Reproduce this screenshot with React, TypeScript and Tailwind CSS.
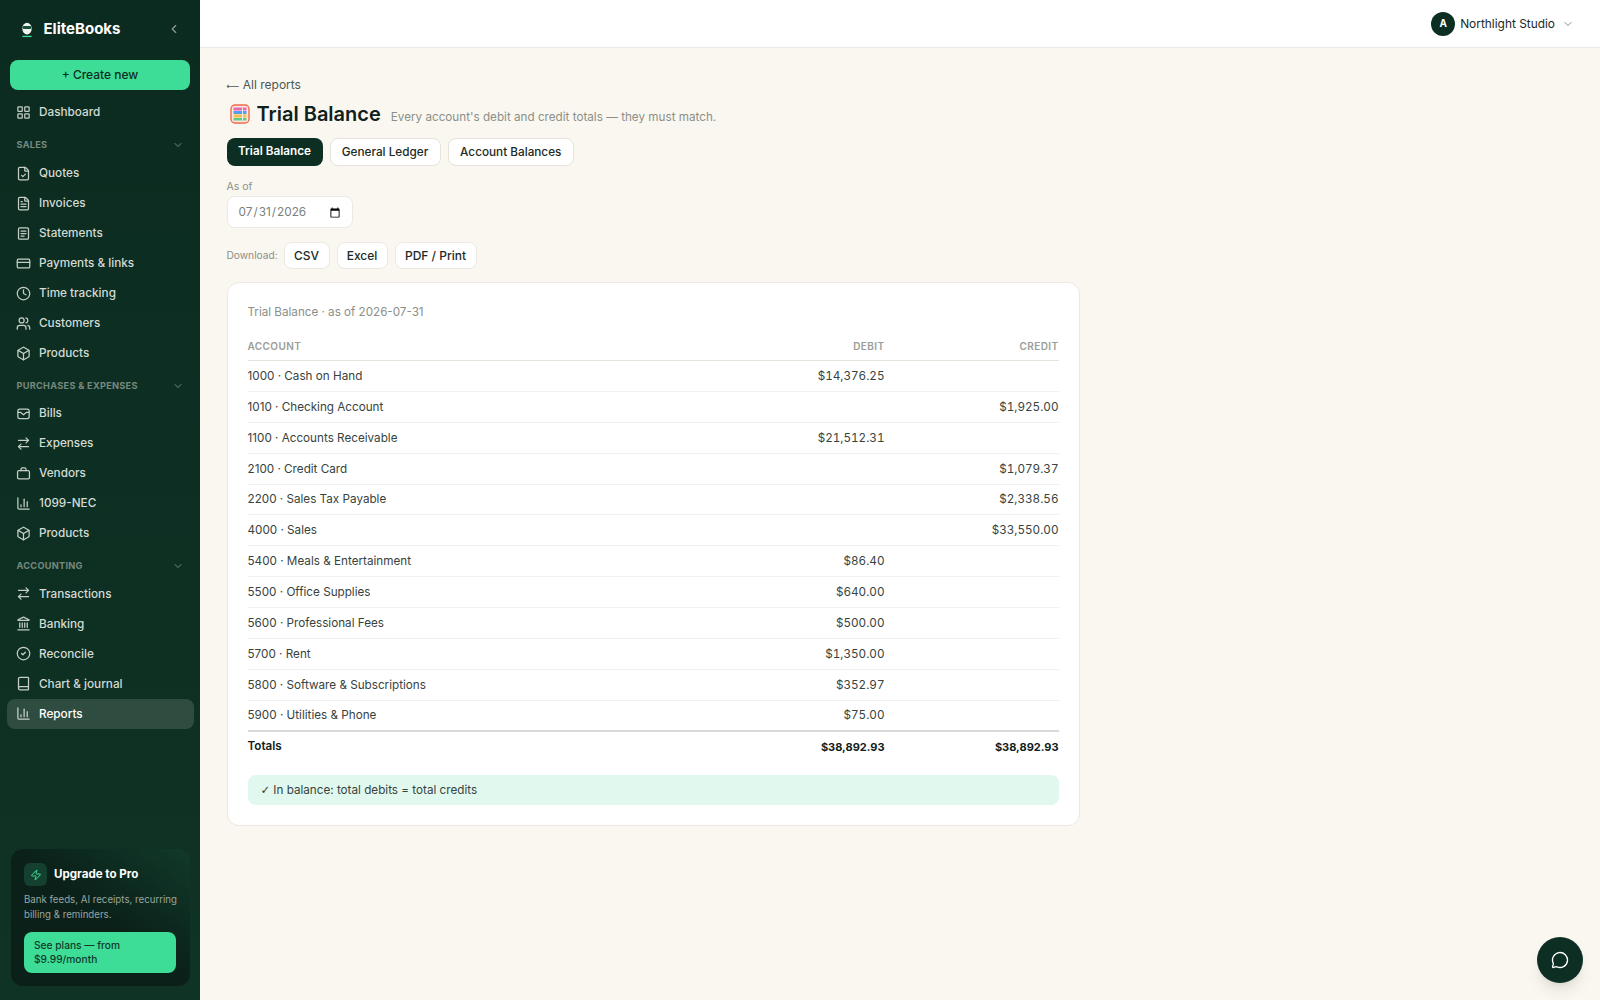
import {
  ArrowRightLeft,
  Book,
  Box,
  ChartColumn,
  ChevronDown,
  ChevronLeft,
  CircleCheck,
  Clock,
  CreditCard,
  FileCheck,
  FileText,
  Landmark,
  LayoutGrid,
  MessageCircle,
  Users,
  Zap,
} from "lucide-react"
import type { ComponentType } from "react"

type IconType = ComponentType<{ className?: string; strokeWidth?: number }>

function StatementIcon({ className, strokeWidth = 2 }: { className?: string; strokeWidth?: number }) {
  return (
    <svg viewBox="0 0 24 24" fill="none" stroke="currentColor" strokeWidth={strokeWidth} strokeLinecap="round" className={className}>
      <rect x="4" y="3" width="16" height="18" rx="2" />
      <path d="M8 8h8M8 12h8M8 16h5" />
    </svg>
  )
}

function BillsIcon({ className, strokeWidth = 2 }: { className?: string; strokeWidth?: number }) {
  return (
    <svg viewBox="0 0 24 24" fill="none" stroke="currentColor" strokeWidth={strokeWidth} strokeLinecap="round" strokeLinejoin="round" className={className}>
      <rect x="3" y="5" width="18" height="15" rx="3" />
      <path d="M3 10h4l5 4 5-4h4" />
    </svg>
  )
}

function VendorIcon({ className, strokeWidth = 2 }: { className?: string; strokeWidth?: number }) {
  return (
    <svg viewBox="0 0 24 24" fill="none" stroke="currentColor" strokeWidth={strokeWidth} strokeLinecap="round" strokeLinejoin="round" className={className}>
      <rect x="2.5" y="7.5" width="19" height="13" rx="2" />
      <path d="M8 7.5V5a2 2 0 0 1 2-2h4a2 2 0 0 1 2 2v2.5" />
    </svg>
  )
}

function Owl() {
  return (
    <svg viewBox="0 0 16 20" className="w-[14px] h-[17px]">
      <ellipse cx="8" cy="9" rx="5.5" ry="6.8" fill="#f4f4ef" />
      <rect x="3" y="6" width="10" height="3.5" rx="1.5" fill="#14513b" />
      <rect x="2.5" y="17.4" width="11" height="1.5" fill="#3ddc97" />
    </svg>
  )
}

function TrialIcon() {
  return (
    <svg viewBox="0 0 20 20" className="w-5 h-5">
      <rect x="1" y="1" width="18" height="18" rx="4" fill="#fde8df" stroke="#f2694e" strokeWidth="1.4" />
      <rect x="3.5" y="3.5" width="13" height="3" fill="#e56bb4" />
      <rect x="3.5" y="7" width="13" height="3" fill="#5b9df0" />
      <rect x="3.5" y="10.5" width="13" height="3" fill="#f2c14e" />
      <rect x="3.5" y="14" width="13" height="2.5" fill="#62c98a" />
      <path d="M12.5 3.5v13" stroke="#fff" strokeWidth="0.8" />
    </svg>
  )
}

function NavItem({ icon: Icon, label, active }: { icon: IconType; label: string; active?: boolean }) {
  return (
    <a
      className={
        active
          ? "flex items-center gap-[8px] h-[30px] px-[9.5px] rounded-lg bg-[#2f4c40] text-white text-[11.75px] font-medium"
          : "flex items-center gap-[8px] h-[30px] px-[9.5px] rounded-lg text-[#d3dbd5] text-[11.75px] font-medium"
      }
    >
      <Icon className="w-[15px] h-[15px] text-[#c5cfc8] shrink-0" strokeWidth={2} />
      <span className="mt-[2px]">{label}</span>
    </a>
  )
}

function NavHeading({ label, className }: { label: string; className: string }) {
  return (
    <div className={`flex items-center justify-between h-[23px] pl-[10px] pr-[10px] text-[#75897f] ${className}`}>
      <span className="text-[9.2px] font-bold tracking-[0.03em]">{label}</span>
      <ChevronDown className="w-3 h-3" />
    </div>
  )
}

const rows = [
  { account: "1000 · Cash on Hand", debit: "$14,376.25", credit: "" },
  { account: "1010 · Checking Account", debit: "", credit: "$1,925.00" },
  { account: "1100 · Accounts Receivable", debit: "$21,512.31", credit: "" },
  { account: "2100 · Credit Card", debit: "", credit: "$1,079.37" },
  { account: "2200 · Sales Tax Payable", debit: "", credit: "$2,338.56" },
  { account: "4000 · Sales", debit: "", credit: "$33,550.00" },
  { account: "5400 · Meals & Entertainment", debit: "$86.40", credit: "" },
  { account: "5500 · Office Supplies", debit: "$640.00", credit: "" },
  { account: "5600 · Professional Fees", debit: "$500.00", credit: "" },
  { account: "5700 · Rent", debit: "$1,350.00", credit: "" },
  { account: "5800 · Software & Subscriptions", debit: "$352.97", credit: "" },
  { account: "5900 · Utilities & Phone", debit: "$75.00", credit: "" },
]

export default function App() {
  return (
    <div className="flex h-[1000px] overflow-hidden bg-[#faf7f0] font-['Inter',sans-serif] text-[#1b2a24]">
      <aside className="w-[200px] shrink-0 flex flex-col bg-gradient-to-b from-[#0c2b20] to-[#0f3325] px-[6.5px] overflow-hidden">
        <div className="flex items-center h-[58px] pl-[13px] pr-[13px] gap-[10px]">
          <Owl />
          <span className="text-[15px] font-bold text-white flex-1">EliteBooks</span>
          <ChevronLeft className="w-[14px] h-[14px] text-[#8fa198]" />
        </div>
        <button className="mx-[3.5px] h-[30px] mt-[2px] mb-[7px] shrink-0 rounded-lg bg-[#3ddc97] text-[#0d2e22] text-[12px] font-medium">
          + Create new
        </button>
        <NavItem icon={LayoutGrid} label="Dashboard" />
        <NavHeading label="SALES" className="mt-[6.5px] mb-[1.5px]" />
        <NavItem icon={FileCheck} label="Quotes" />
        <NavItem icon={FileText} label="Invoices" />
        <NavItem icon={StatementIcon} label="Statements" />
        <NavItem icon={CreditCard} label="Payments & links" />
        <NavItem icon={Clock} label="Time tracking" />
        <NavItem icon={Users} label="Customers" />
        <NavItem icon={Box} label="Products" />
        <NavHeading label="PURCHASES & EXPENSES" className="mt-[6.5px] mb-[0.5px]" />
        <NavItem icon={BillsIcon} label="Bills" />
        <NavItem icon={ArrowRightLeft} label="Expenses" />
        <NavItem icon={VendorIcon} label="Vendors" />
        <NavItem icon={ChartColumn} label="1099-NEC" />
        <NavItem icon={Box} label="Products" />
        <NavHeading label="ACCOUNTING" className="mt-[6.5px] mb-[1px]" />
        <NavItem icon={ArrowRightLeft} label="Transactions" />
        <NavItem icon={Landmark} label="Banking" />
        <NavItem icon={CircleCheck} label="Reconcile" />
        <NavItem icon={Book} label="Chart & journal" />
        <NavItem icon={ChartColumn} label="Reports" active />
        <div className="mt-auto mb-[14px] mx-[4px] rounded-xl bg-gradient-to-bl from-[#113a2a] via-[#0a2019] to-[#0a2019] px-[13.5px] pt-[14px] pb-[13px]">
          <div className="flex items-center gap-[7px]">
            <div className="w-[23px] h-[23px] rounded-md bg-[#14402f] flex items-center justify-center">
              <Zap className="w-3 h-3 text-[#3ddc97]" />
            </div>
            <span className="text-[11.6px] font-bold text-white">Upgrade to Pro</span>
          </div>
          <p className="mt-[6px] text-[9.7px] leading-[15px] text-[#9aa69f] whitespace-nowrap">
            Bank feeds, AI receipts, recurring
            <br />
            billing & reminders.
          </p>
          <button className="mt-[10px] w-full rounded-lg bg-[#3ddc97] text-[#0d3a2a] text-[10.2px] leading-[13.5px] font-medium text-left px-[10px] py-[7px]">
            See plans — from $9.99/month
          </button>
        </div>
      </aside>

      <div className="flex-1 flex flex-col min-w-0">
        <header className="h-[48px] shrink-0 bg-white border-b border-[#ebe9e3] flex items-center justify-end pr-[26px]">
          <div className="w-[24px] h-[24px] rounded-full bg-[#0d2e22] text-white text-[10px] font-bold flex items-center justify-center">A</div>
          <span className="ml-[5px] text-[11.9px] text-[#1b2a24]">Northlight Studio</span>
          <ChevronDown className="ml-[7px] w-3 h-3 text-[#8a8f8b]" />
        </header>

        <main className="flex-1 pl-[26.5px] pt-[29px]">
          <a className="block h-[16px] text-[12px] leading-[16px] text-[#4c5651]">
            <span className="font-['DejaVu_Sans',sans-serif] text-[9px] leading-[0]">⟵</span> All reports
          </a>
          <div className="mt-[8px] ml-[3px] flex items-center h-[26px]">
            <TrialIcon />
            <h1 className="ml-[7px] text-[20px] font-semibold text-[#10201a]">Trial Balance</h1>
            <span className="ml-[10px] mt-[8px] text-[11.7px] text-[#8b8f88]">Every account's debit and credit totals — they must match.</span>
          </div>
          <div className="mt-[11px] flex gap-[7px]">
            <button className="h-[28px] w-[96px] rounded-lg bg-[#0d2e22] text-white text-[11.75px] font-semibold">Trial Balance</button>
            <button className="h-[28px] w-[111px] pt-[1px] rounded-lg bg-white border border-[#e6e3dc] text-[11.75px] font-medium">General Ledger</button>
            <button className="h-[28px] w-[126.5px] pt-[1px] rounded-lg bg-white border border-[#e6e3dc] text-[11.75px] font-medium">Account Balances</button>
          </div>
          <div className="mt-[14px] text-[10.5px] leading-[13px] text-[#8b8f88]">As of</div>
          <input
            type="date"
            defaultValue="2026-07-31"
            className="block mt-[3px] w-[126px] h-[32px] rounded-lg bg-white border border-[#ece9e2] pl-[10px] pr-[9px] pt-[1px] text-[11.8px] text-[#7b807c]"
          />
          <div className="mt-[14px] flex items-center gap-[7px]">
            <span className="text-[10.2px] text-[#8b8f88] w-[50px]">Download:</span>
            <button className="h-[27px] w-[46px] rounded-lg bg-white border border-[#ece9e2] text-[12px] font-medium">CSV</button>
            <button className="h-[27px] w-[51px] rounded-lg bg-white border border-[#ece9e2] text-[12px] font-medium">Excel</button>
            <button className="h-[27px] w-[82px] rounded-lg bg-white border border-[#ece9e2] text-[12px] font-medium">PDF / Print</button>
          </div>

          <section className="mt-[13px] w-[853px] rounded-xl bg-white border border-[#ece9e2] px-[20px] pt-[21px] pb-[20px]">
            <div className="text-[11.65px] leading-[16px] text-[#8b8f88]">Trial Balance · as of 2026-07-31</div>
            <table className="mt-[13.5px] w-full border-collapse text-[11.7px]">
              <thead>
                <tr className="h-[27px] border-b border-[#e6e3dc] text-[10px] text-[#9a9e98] tracking-[0.04em]">
                  <th className="text-left font-semibold">ACCOUNT</th>
                  <th className="text-right font-semibold w-[200px]">DEBIT</th>
                  <th className="text-right font-semibold w-[174px]">CREDIT</th>
                </tr>
              </thead>
              <tbody>
                {rows.map((r) => (
                  <tr key={r.account} className="h-[30.9px] border-b border-[#f3f1ec] text-[#38433e]">
                    <td className="pt-[1.5px]">{r.account}</td>
                    <td className="pt-[1.5px] text-right tabular-nums">{r.debit}</td>
                    <td className="pt-[1.5px] text-right tabular-nums">{r.credit}</td>
                  </tr>
                ))}
                <tr className="h-[31px] border-t-2 border-[#d9d9d5] text-[#10201a]">
                  <td className="font-semibold">Totals</td>
                  <td className="text-right font-bold text-[11px]">$38,892.93</td>
                  <td className="text-right font-bold text-[11px]">$38,892.93</td>
                </tr>
              </tbody>
            </table>
            <div className="mt-[13px] h-[30px] pt-[1px] rounded-lg bg-[#e1f8ee] flex items-center px-[13px] text-[11.7px] text-[#38433e]">
              <span className="font-['DejaVu_Sans',sans-serif] mr-[3px]">✓</span> In balance: total debits = total credits
            </div>
          </section>
        </main>
      </div>

      <button className="absolute right-[17px] top-[937px] w-[46px] h-[46px] rounded-full bg-[#0d2e22] shadow-lg flex items-center justify-center">
        <MessageCircle className="w-[18px] h-[18px] text-white" strokeWidth={1.8} />
      </button>
    </div>
  )
}
